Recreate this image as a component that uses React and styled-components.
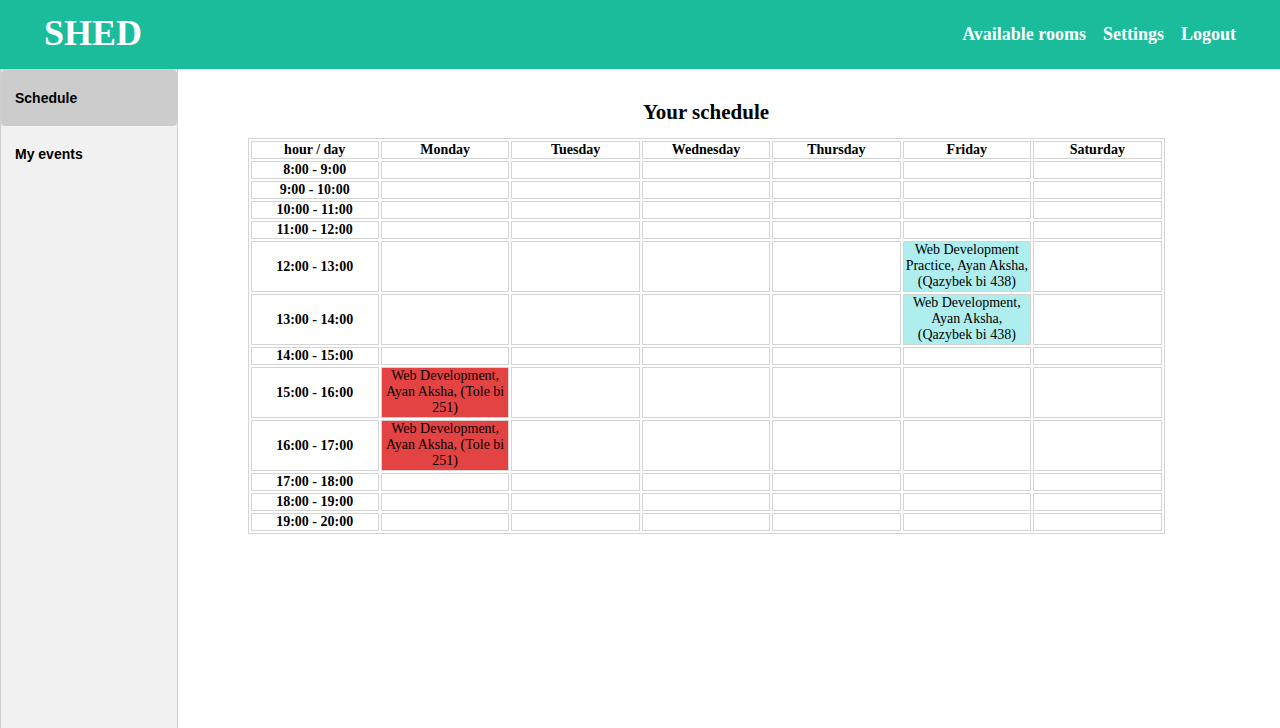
import React from "react";
import styled, { createGlobalStyle } from "styled-components";

const days = ["Monday", "Tuesday", "Wednesday", "Thursday", "Friday", "Saturday"];

const hours = [
  "8:00 - 9:00",
  "9:00 - 10:00",
  "10:00 - 11:00",
  "11:00 - 12:00",
  "12:00 - 13:00",
  "13:00 - 14:00",
  "14:00 - 15:00",
  "15:00 - 16:00",
  "16:00 - 17:00",
  "17:00 - 18:00",
  "18:00 - 19:00",
  "19:00 - 20:00",
];

// events keyed by "hour|day"
const events = {
  "12:00 - 13:00|Friday": {
    text: "Web Development Practice, Ayan Aksha, (Qazybek bi 438)",
    kind: "practice",
  },
  "13:00 - 14:00|Friday": {
    text: "Web Development, Ayan Aksha, (Qazybek bi 438)",
    kind: "practice",
  },
  "15:00 - 16:00|Monday": {
    text: "Web Development, Ayan Aksha, (Tole bi 251)",
    kind: "lecture",
  },
  "16:00 - 17:00|Monday": {
    text: "Web Development, Ayan Aksha, (Tole bi 251)",
    kind: "lecture",
  },
};

const App = () => {
  return (
    <>
      <GlobalStyle />
      <Header>
        <Logo>SHED</Logo>
        <Nav>
          <NavLink>Available rooms</NavLink>
          <NavLink>Settings</NavLink>
          <NavLink>Logout</NavLink>
        </Nav>
      </Header>
      <Body>
        <Sidebar>
          <SideItem active>Schedule</SideItem>
          <SideItem>My events</SideItem>
        </Sidebar>
        <Main>
          <Title>Your schedule</Title>
          <Table>
            <tbody>
              <tr>
                <Th>hour / day</Th>
                {days.map((d) => (
                  <Th key={d}>{d}</Th>
                ))}
              </tr>
              {hours.map((h) => (
                <tr key={h}>
                  <Th>{h}</Th>
                  {days.map((d) => {
                    const ev = events[`${h}|${d}`];
                    return (
                      <Td key={d} kind={ev?.kind}>
                        {ev ? ev.text : null}
                      </Td>
                    );
                  })}
                </tr>
              ))}
            </tbody>
          </Table>
        </Main>
      </Body>
    </>
  );
};

const GlobalStyle = createGlobalStyle`
  body {
    margin: 0;
    font-family: "Liberation Serif", "Times New Roman", serif;
    background: #fff;
  }
`;

const Header = styled.div`
  height: 69px;
  background-color: #1abc9c;
  display: flex;
  justify-content: space-between;
  align-items: center;
  padding: 0 44px;
`;
const Logo = styled.span`
  font-size: 36px;
  font-weight: bold;
  color: #fff;
  margin-top: -4px;
`;
const Nav = styled.div`
  display: flex;
  gap: 17px;
`;
const NavLink = styled.span`
  font-size: 18px;
  font-weight: bold;
  color: #fff;
`;
const Body = styled.div`
  display: flex;
  height: calc(100vh - 69px);
`;
const Sidebar = styled.div`
  width: 178px;
  flex-shrink: 0;
  box-sizing: border-box;
  background-color: #f1f1f1;
  border: 1px solid #cfcfcf;
  border-bottom: none;
`;
const SideItem = styled.div`
  height: 56px;
  display: flex;
  align-items: center;
  padding-left: 14px;
  font-family: "Liberation Sans", Arial, sans-serif;
  font-size: 14px;
  font-weight: bold;
  color: #000;
  border-radius: 4px;
  background-color: ${(props) => (props.active ? "#cccccc" : "transparent")};
`;
const Main = styled.div`
  flex: 1;
  display: flex;
  flex-direction: column;
  align-items: center;
  padding: 31px 46px 0 0;
`;
const Title = styled.h2`
  font-size: 21px;
  font-weight: bold;
  margin: 0 0 14px;
  line-height: 24px;
`;
const Table = styled.table`
  width: 917px;
  table-layout: fixed;
  border-collapse: separate;
  border-spacing: 2px;
  border: 1px solid #d4d4d4;
  font-size: 14px;
  line-height: 16px;
`;
const Th = styled.th`
  border: 1px solid #d4d4d4;
  padding: 0;
  font-weight: bold;
  text-align: center;
`;
const Td = styled.td`
  border: 1px solid #d4d4d4;
  padding: 0 0 ${(props) => (props.kind ? "1px" : "0")};
  height: 16px;
  text-align: center;
  background-color: ${(props) =>
    props.kind === "practice"
      ? "#afeeee"
      : props.kind === "lecture"
      ? "#e44343"
      : "transparent"};
`;

export default App;
